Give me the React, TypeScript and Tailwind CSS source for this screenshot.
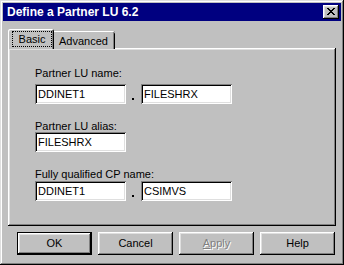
import type { ReactNode } from 'react';

const raised =
  'shadow-[inset_-1px_-1px_0_0_#000,inset_1px_1px_0_0_#fff,inset_-2px_-2px_0_0_#808080,inset_2px_2px_0_0_#dfdfdf]';
const sunken =
  'shadow-[inset_1px_1px_0_0_#808080,inset_-1px_-1px_0_0_#fff,inset_2px_2px_0_0_#000,inset_-2px_-2px_0_0_#dfdfdf]';

function Field({ value }: { value: string }) {
  return (
    <div className={`w-[91px] h-[20px] bg-white flex items-center pl-[3px] pt-px text-[11px] leading-[13px] ${sunken}`}>
      {value}
    </div>
  );
}

function Dot() {
  return <div className="w-[2px] h-[2px] bg-black ml-[6px] mr-[7px] mb-[4px]" />;
}

function Label({ children, top }: { children: ReactNode; top: string }) {
  return <div className={`text-[11px] leading-[12px] h-[12px] ${top}`}>{children}</div>;
}

function Button({ children, isDefault, disabled }: { children: ReactNode; isDefault?: boolean; disabled?: boolean }) {
  const inner = (
    <div
      className={`h-full w-full flex items-center justify-center text-[11px] ${raised} ${
        disabled ? 'text-[#808080] [text-shadow:1px_1px_0_#fff]' : 'text-black'
      }`}
    >
      {children}
    </div>
  );
  if (isDefault) {
    return <div className="w-[75px] h-[23px] border border-black">{inner}</div>;
  }
  return <div className="w-[75px] h-[23px]">{inner}</div>;
}

export default function App() {
  return (
    <div
      className="w-[344px] h-[265px] bg-[#c0c0c0] p-[3px] text-black shadow-[inset_-1px_-1px_0_0_#000,inset_1px_1px_0_0_#dfdfdf,inset_-2px_-2px_0_0_#808080,inset_2px_2px_0_0_#fff]"
      style={{ fontFamily: '"Liberation Sans", Arial, sans-serif' }}
    >
      {/* title bar */}
      <div className="h-[18px] bg-[#000080] flex items-center justify-between pl-[4px] pr-[2px]">
        <span className="text-white font-bold text-[12px] leading-[14px]">Define a Partner LU 6.2</span>
        <div className={`w-[16px] h-[14px] bg-[#c0c0c0] flex items-start pl-[4px] pt-[3px] ${raised}`}>
          <svg width="8" height="7" viewBox="0 0 8 7" shapeRendering="crispEdges">
            <path
              fill="#000"
              d="M0 0h2v1H0zM6 0h2v1H6zM1 1h2v1H1zM5 1h2v1H5zM2 2h4v1H2zM3 3h2v1H3zM2 4h4v1H2zM1 5h2v1H1zM5 5h2v1H5zM0 6h2v1H0zM6 6h2v1H6z"
            />
          </svg>
        </div>
      </div>

      {/* tabs */}
      <div className="mt-[8px] ml-[5px] h-[20px] flex items-end">
        <div className="relative z-10 w-[46px] h-[20px] bg-[#c0c0c0] rounded-tl-[2px] rounded-tr-[2px] pl-[4px] pt-[2px] shadow-[inset_1px_1px_0_0_#fff,inset_-1px_0_0_0_#000,inset_-2px_0_0_0_#808080]">
          <div className="w-[40px] h-[16px] border border-dotted border-black flex items-center justify-center text-[11px] leading-[13px]">
            Basic
          </div>
        </div>
        <div className="w-[61px] h-[18px] bg-[#c0c0c0] rounded-tr-[2px] pl-[5px] pt-[4px] text-[11px] leading-[13px] shadow-[inset_0_1px_0_0_#fff,inset_-1px_0_0_0_#000,inset_-2px_0_0_0_#808080]">
          Advanced
        </div>
      </div>

      {/* panel */}
      <div className={`-mt-px ml-[5px] w-[328px] h-[178px] pl-[27px] pt-[19px] ${raised}`}>
        <Label top="">Partner LU name:</Label>
        <div className="flex items-end mt-[5px]">
          <Field value="DDINET1" />
          <Dot />
          <Field value="FILESHRX" />
        </div>
        <Label top="mt-[16px]">Partner LU alias:</Label>
        <div className="flex items-end">
          <Field value="FILESHRX" />
        </div>
        <Label top="mt-[16px]">Fully qualified CP name:</Label>
        <div className="flex items-end mt-px">
          <Field value="DDINET1" />
          <Dot />
          <Field value="CSIMVS" />
        </div>
      </div>

      {/* buttons */}
      <div className="mt-[6px] pl-[14px] flex gap-[6px]">
        <Button isDefault>OK</Button>
        <Button>Cancel</Button>
        <Button disabled>
          <span>
            <u>A</u>pply
          </span>
        </Button>
        <Button>Help</Button>
      </div>
    </div>
  );
}
